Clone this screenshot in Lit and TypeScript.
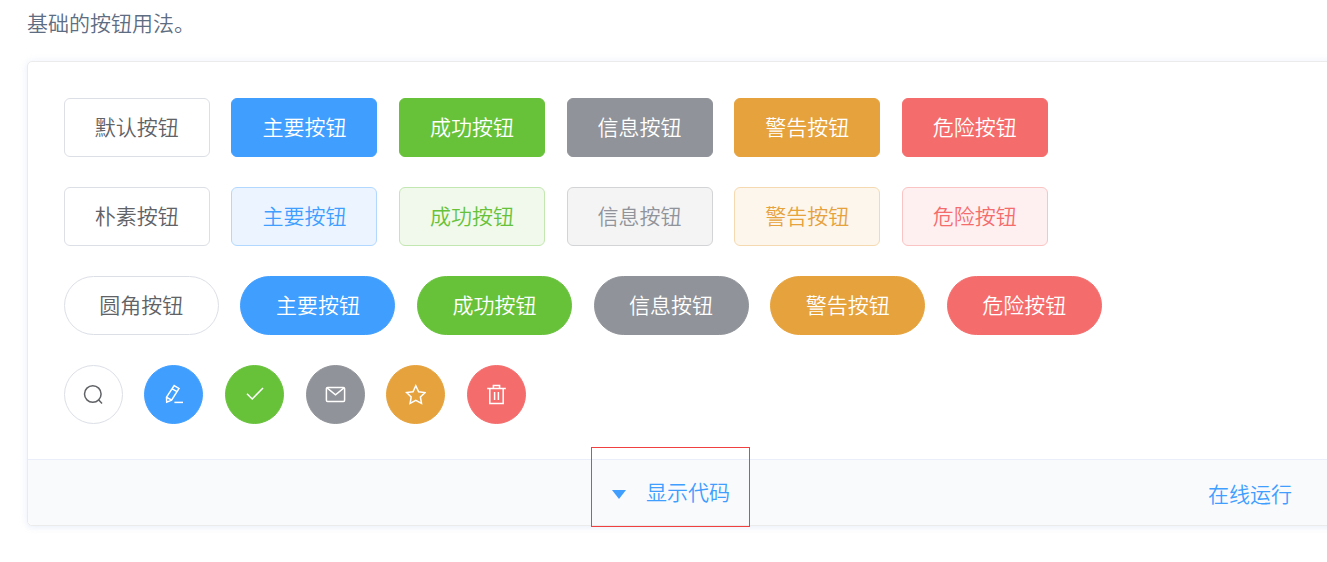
import {css, html, LitElement, svg} from 'lit';
import {customElement} from 'lit/decorators.js';

const kinds = [
    {type: 'primary', label: '主要按钮'},
    {type: 'success', label: '成功按钮'},
    {type: 'info', label: '信息按钮'},
    {type: 'warning', label: '警告按钮'},
    {type: 'danger', label: '危险按钮'},
];

// icons are drawn on a 21x21 box, stroke only
const icons = [
    {type: '', shape: svg`<circle cx="9.8" cy="10" r="8.3"/><path d="M15.8 16l3.2 3.4"/>`},
    {type: 'primary', shape: svg`<path d="M11.2 1.6l4.8 2.8-7.4 11.8-4.9 2-.2-5zM9.2 4.8l4.8 2.8M3.8 13.4l4.6 2.6"/><path d="M11.4 18.4h8.6"/>`},
    {type: 'success', shape: svg`<path d="M3 9.8l5.2 5.2L19 4"/>`},
    {type: 'info', shape: svg`<rect x="1.4" y="3.4" width="18.2" height="14" rx="1.2"/><path d="M2 3.8l8.5 7L19 3.8"/>`},
    {type: 'warning', shape: svg`<path d="M10.8 1.8l2.8 5.9 6.4.9-4.6 4.4 1.1 6.4-5.7-3.1-5.7 3.1 1.1-6.4-4.6-4.4 6.4-.9z"/>`},
    {type: 'danger', shape: svg`<path d="M1.2 4.4h18.6M7.4 4.2V1.6h6.2v2.6M3.8 4.6v14.8h13.4V4.6M8.6 8v8M12.4 8v8"/>`},
];

@customElement('app-root')
export class AppRoot extends LitElement {
    static override styles = css`
      :host {
        display: block;
        height: 562px;
        overflow: hidden;
        background: #fff;
        font-family: "Noto Sans CJK SC", sans-serif;
        font-weight: 350;
      }

      .desc {
        margin: 0;
        padding: 7px 0 0 27px;
        height: 61px;
        box-sizing: border-box;
        font-size: 21px;
        line-height: 30px;
        color: #5e6d82;
      }

      .card {
        width: 1330px;
        margin-left: 27px;
        box-sizing: border-box;
        border: 1px solid #ebebeb;
        border-radius: 5px;
        box-shadow: 0 0 8px 0 rgba(232, 237, 250, .6), 0 2px 4px 0 rgba(232, 237, 250, .5);
      }

      .source {
        padding: 36px 36px 35px 35.8px;
        display: flex;
        flex-direction: column;
        gap: 30px;
      }

      .row {
        display: flex;
        gap: 21.6px;
      }

      .btn {
        box-sizing: border-box;
        flex: none;
        width: 146px;
        height: 59px;
        padding-bottom: 3px;
        display: flex;
        align-items: center;
        justify-content: center;
        border: 1px solid #dcdfe6;
        border-radius: 6px;
        background: #fff;
        color: #606266;
        font-size: 21px;
      }

      .primary { background: #409eff; border-color: #409eff; color: #fff; }
      .success { background: #67c23a; border-color: #67c23a; color: #fff; }
      .info { background: #909399; border-color: #909399; color: #fff; }
      .warning { background: #e6a23c; border-color: #e6a23c; color: #fff; }
      .danger { background: #f56c6c; border-color: #f56c6c; color: #fff; }

      .plain.primary { background: #ecf5ff; border-color: #b3d8ff; color: #409eff; }
      .plain.success { background: #f0f9eb; border-color: #c2e7b0; color: #67c23a; }
      .plain.info { background: #f4f4f5; border-color: #d3d4d6; color: #909399; }
      .plain.warning { background: #fdf6ec; border-color: #f5dab1; color: #e6a23c; }
      .plain.danger { background: #fef0f0; border-color: #fbc4c4; color: #f56c6c; }

      .round {
        width: 155px;
        border-radius: 30px;
      }

      .circle {
        width: 59px;
        padding: 0;
        border-radius: 50%;
      }

      .circle svg {
        width: 21px;
        height: 21px;
        fill: none;
        stroke: currentColor;
        stroke-width: 1.5;
      }

      .footer {
        height: 66px;
        box-sizing: border-box;
        border-top: 1px solid #eaeefb;
        background: #f9fafc;
        border-radius: 0 0 5px 5px;
        display: flex;
        align-items: center;
        justify-content: space-between;
        padding: 0 64px 0 584px;
        color: #409eff;
        font-size: 21px;
      }

      .toggle {
        position: relative;
        display: flex;
        align-items: center;
        gap: 20px;
      }

      .label {
        padding-bottom: 4px;
      }

      .arrow {
        width: 0;
        height: 0;
        margin-top: 4px;
        border-style: solid;
        border-width: 9px 7.5px 0;
        border-color: #409eff transparent transparent;
      }

      .marker {
        position: absolute;
        left: -21px;
        top: -29px;
        width: 159px;
        height: 80px;
        box-sizing: border-box;
        border: 1px solid #f04040;
      }
    `;

    override render() {
        return html`
            <p class="desc">基础的按钮用法。</p>
            <div class="card">
                <div class="source">
                    <div class="row">
                        <div class="btn">默认按钮</div>
                        ${kinds.map(k => html`<div class="btn ${k.type}">${k.label}</div>`)}
                    </div>
                    <div class="row">
                        <div class="btn plain">朴素按钮</div>
                        ${kinds.map(k => html`<div class="btn plain ${k.type}">${k.label}</div>`)}
                    </div>
                    <div class="row">
                        <div class="btn round">圆角按钮</div>
                        ${kinds.map(k => html`<div class="btn round ${k.type}">${k.label}</div>`)}
                    </div>
                    <div class="row">
                        ${icons.map(i => html`
                            <div class="btn circle ${i.type}"><svg viewBox="0 0 21 21">${i.shape}</svg></div>
                        `)}
                    </div>
                </div>
                <div class="footer">
                    <div class="toggle">
                        <span class="arrow"></span>
                        <span class="label">显示代码</span>
                        <span class="marker"></span>
                    </div>
                    <span>在线运行</span>
                </div>
            </div>
        `;
    }
}

declare global {
    interface HTMLElementTagNameMap {
        'app-root': AppRoot;
    }
}
